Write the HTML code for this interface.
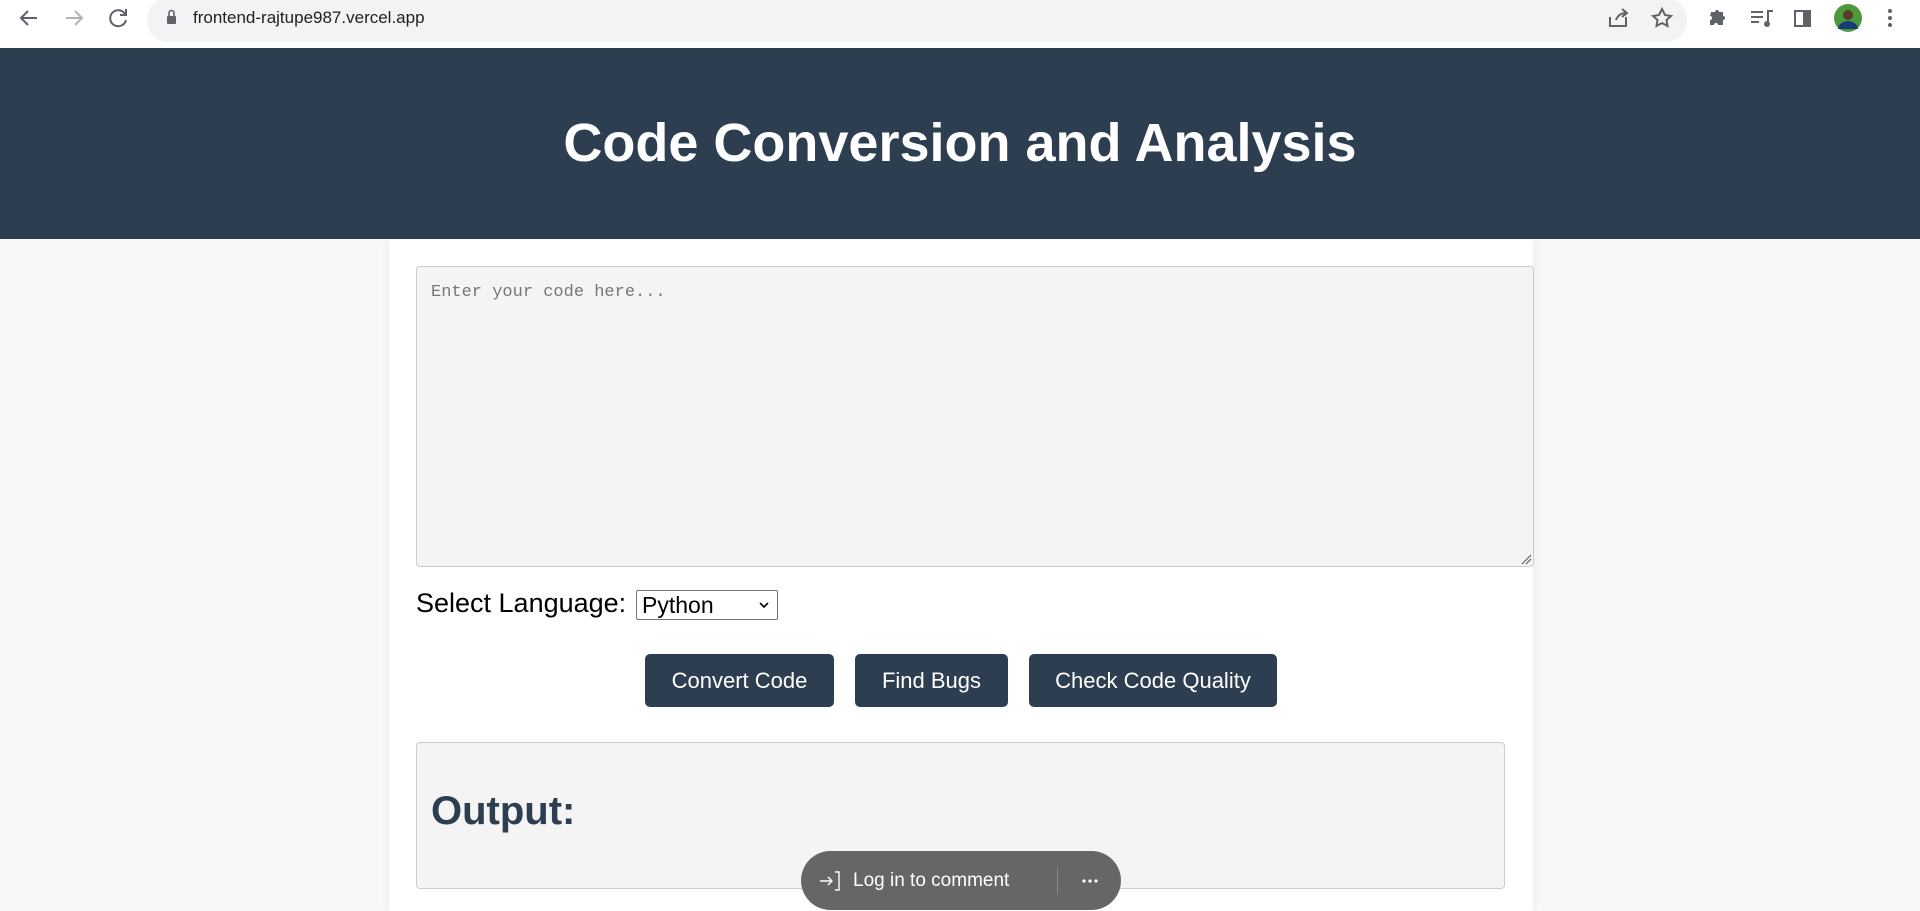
<!DOCTYPE html>
<html style="overflow:hidden"><head><meta charset="utf-8"><style>
*{box-sizing:border-box;margin:0;padding:0}
body{width:1920px;height:911px;overflow:hidden;background:#f8f8f8;font-family:"Liberation Sans",Arial,sans-serif;position:relative}
.abs{position:absolute}
.chrome{left:0;top:0;width:1920px;height:48px;background:#fff}
.omni{left:147px;top:-2px;width:1540px;height:44px;background:#f1f3f4;border-radius:21px}
.url{left:193px;top:8px;font-size:17px;color:#202124}
header{position:absolute;left:0;top:48px;width:1920px;height:191px;background:#2c3e50;color:#fff;text-align:center}
header h1{font-size:54px;font-weight:bold;line-height:191px}
.cont{left:389px;top:239px;width:1144px;height:672px;background:#fff;box-shadow:0 0 8px rgba(0,0,0,.08)}
.ta{left:416px;top:266px;width:1118px;height:301px;background:#f4f4f4;border:1px solid #ccc;border-radius:4px}
.ph{left:431px;top:283px;font-family:"Liberation Mono",monospace;font-size:17px;color:#777}
.lbl{left:416px;top:588px;font-size:27px;color:#000}
.sel{left:636px;top:590px;width:142px;height:30px;border:1px solid #767676;border-radius:2px;background:#fff;font-size:23px;padding-left:5px;line-height:28px}
.btn{top:654px;height:53px;background:#2c3e50;color:#fff;border-radius:5px;font-size:22px;text-align:center;line-height:53px}
.out{left:416px;top:742px;width:1089px;height:147px;background:#f4f4f4;border:1px solid #ccc;border-radius:4px}
.outh{left:431px;top:789px;font-size:40px;font-weight:bold;color:#2c3e50}
.pill{left:801px;top:851px;width:320px;height:59px;background:#666;border-radius:30px;color:#fff}
</style></head><body>
<div class="abs chrome"></div>
<div class="abs omni"></div>
<svg class="abs" style="left:0;top:0" width="1920" height="48">
<g stroke="#5f6368" stroke-width="2" fill="none">
<path d="M37 18H21M28 11l-7 7 7 7"/>
<path d="M66 18h16M75 11l7 7-7 7" stroke="#b0b3b7"/>
<path d="M125 14a8 8 0 1 0 1 6"/><path d="M126 9v6h-6"/>
<path d="M1610 17v9h16v-9M1616 20c2-5 6-7 10-7M1622 9l5 4-5 4"/>
<path d="M1662 9l3 6 6 1-4.5 4 1 6-5.5-3-5.5 3 1-6-4.5-4 6-1z"/>
<path d="M1751 12h12M1751 17h12M1751 22h8M1768 24V11h5"/>
<rect x="1795" y="11" width="15" height="15"/>
</g>
<path d="M1711 12h4a2 2 0 0 1 4 0h4v4a2 2 0 0 1 0 4v5h-5a2 2 0 0 0-4 0h-4v-5a2 2 0 0 0 0-4z" fill="#5f6368"/>
<rect x="1803" y="11" width="7" height="15" fill="#5f6368"/>
<circle cx="1767" cy="24" r="3" fill="#5f6368"/>
<rect x="167" y="16" width="9" height="8" rx="1" fill="#5f6368"/><path d="M169 16v-3a2.5 2.5 0 0 1 5 0v3" stroke="#5f6368" stroke-width="1.6" fill="none"/>
<circle cx="1848" cy="18" r="14" fill="#4a9a3a"/><circle cx="1848" cy="15" r="5" fill="#5a3a2a"/><path d="M1838 29a10 8 0 0 1 20 0z" fill="#1a3a7a"/>
<g fill="#5f6368"><circle cx="1890" cy="11" r="2"/><circle cx="1890" cy="18" r="2"/><circle cx="1890" cy="25" r="2"/></g>
</svg>
<div class="abs url">frontend-rajtupe987.vercel.app</div>
<header><h1>Code Conversion and Analysis</h1></header>
<div class="abs cont"></div>
<div class="abs ta"></div>
<svg class="abs" style="left:1520px;top:553px" width="12" height="12"><path d="M2 11L11 2M6 11l5-5" stroke="#555" stroke-width="1"/></svg>
<div class="abs ph">Enter your code here...</div>
<div class="abs lbl">Select Language:</div>
<div class="abs sel">Python<svg class="abs" style="right:8px;top:11px" width="10" height="8"><path d="M1 1l4 4 4-4" stroke="#000" stroke-width="1.6" fill="none"/></svg></div>
<div class="abs btn" style="left:645px;width:189px">Convert Code</div>
<div class="abs btn" style="left:855px;width:153px">Find Bugs</div>
<div class="abs btn" style="left:1029px;width:248px">Check Code Quality</div>
<div class="abs out"></div>
<div class="abs outh">Output:</div>
<div class="abs pill">
<svg class="abs" style="left:17px;top:18px" width="24" height="24"><path d="M2 12h12M10 8l4 4-4 4M17 3h4v18h-4" stroke="#fff" stroke-width="1.4" fill="none"/></svg>
<div class="abs" style="left:52px;top:19px;font-size:19px">Log in to comment</div>
<div class="abs" style="left:256px;top:16px;width:1px;height:28px;background:#888"></div>
<svg class="abs" style="left:280px;top:27px" width="20" height="6"><g fill="#fff"><circle cx="3" cy="3" r="1.6"/><circle cx="9" cy="3" r="1.6"/><circle cx="15" cy="3" r="1.6"/></g></svg>
</div>
</body></html>
